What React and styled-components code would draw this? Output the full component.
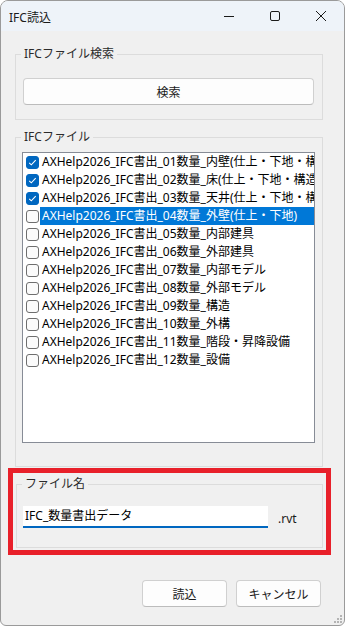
import styled, { createGlobalStyle } from "styled-components"

const Global = createGlobalStyle`
html, body {
margin: 0;
padding: 0;
background: #ffffff;
}
body {
font-family: "Segoe UI", "Noto Sans", "Noto Sans CJK JP", sans-serif;
font-size: 12px;
}
`

const files = [
    { name: "AXHelp2026_IFC書出_01数量_内壁(仕上・下地・構造)", checked: true },
    { name: "AXHelp2026_IFC書出_02数量_床(仕上・下地・構造)", checked: true },
    { name: "AXHelp2026_IFC書出_03数量_天井(仕上・下地・構造)", checked: true },
    { name: "AXHelp2026_IFC書出_04数量_外壁(仕上・下地)", checked: false, selected: true },
    { name: "AXHelp2026_IFC書出_05数量_内部建具", checked: false },
    { name: "AXHelp2026_IFC書出_06数量_外部建具", checked: false },
    { name: "AXHelp2026_IFC書出_07数量_内部モデル", checked: false },
    { name: "AXHelp2026_IFC書出_08数量_外部モデル", checked: false },
    { name: "AXHelp2026_IFC書出_09数量_構造", checked: false },
    { name: "AXHelp2026_IFC書出_10数量_外構", checked: false },
    { name: "AXHelp2026_IFC書出_11数量_階段・昇降設備", checked: false },
    { name: "AXHelp2026_IFC書出_12数量_設備", checked: false },
]

export default function App(){
    return(
        <>
            <Global />
            <Window>
                <TitleBar>
                    <WindowTitle>IFC読込</WindowTitle>
                    <Caption>
                        <CaptionButton>
                            <svg width="12" height="12" viewBox="0 0 12 12">
                                <path d="M1 6.5h10" stroke="#1a1a1a" strokeWidth="1" />
                            </svg>
                        </CaptionButton>
                        <CaptionButton>
                            <svg width="12" height="12" viewBox="0 0 12 12">
                                <rect x="1.5" y="1.5" width="9" height="9" rx="1.5" fill="none" stroke="#1a1a1a" strokeWidth="1" />
                            </svg>
                        </CaptionButton>
                        <CaptionButton>
                            <svg width="12" height="12" viewBox="0 0 12 12">
                                <path d="M1 1l10 10M11 1L1 11" stroke="#1a1a1a" strokeWidth="1" />
                            </svg>
                        </CaptionButton>
                    </Caption>
                </TitleBar>
                <Body>
                    <SearchGroup>
                        <GroupLabel>IFCファイル検索</GroupLabel>
                        <PushButton wide>検索</PushButton>
                    </SearchGroup>
                    <FileGroup>
                        <GroupLabel>IFCファイル</GroupLabel>
                        <ListBox>
                            {files.map((f) => (
                                <Row key={f.name}>
                                    <CheckBox checked={f.checked}>
                                        {f.checked && (
                                            <svg width="9" height="9" viewBox="0 0 9 9">
                                                <path d="M1.2 4.8l2.1 2 4.4-4.6" fill="none" stroke="#ffffff" strokeWidth="1.1" />
                                            </svg>
                                        )}
                                    </CheckBox>
                                    <ItemText selected={f.selected}>{f.name}</ItemText>
                                </Row>
                            ))}
                        </ListBox>
                    </FileGroup>
                    <Highlight>
                        <NameGroup>
                            <GroupLabel>ファイル名</GroupLabel>
                            <NameRow>
                                <TextInput>IFC_数量書出データ</TextInput>
                                <Ext>.rvt</Ext>
                            </NameRow>
                        </NameGroup>
                    </Highlight>
                    <Footer>
                        <PushButton>読込</PushButton>
                        <PushButton>キャンセル</PushButton>
                    </Footer>
                </Body>
                <Grip>
                    <svg width="8" height="8" viewBox="0 0 8 8">
                        <rect x="6" y="0" width="2" height="2" fill="#b4b4b4" />
                        <rect x="3" y="3" width="2" height="2" fill="#b4b4b4" />
                        <rect x="6" y="3" width="2" height="2" fill="#b4b4b4" />
                        <rect x="0" y="6" width="2" height="2" fill="#b4b4b4" />
                        <rect x="3" y="6" width="2" height="2" fill="#b4b4b4" />
                        <rect x="6" y="6" width="2" height="2" fill="#b4b4b4" />
                    </svg>
                </Grip>
            </Window>
        </>
    )
}

const Window = styled.div`
position: relative;
box-sizing: border-box;
width: 345px;
height: 626px;
border: 1px solid #9a9a9a;
border-radius: 8px 8px 6px 6px;
background: #f0f0f0;
overflow: hidden;
display: flex;
flex-direction: column;
`

const TitleBar = styled.div`
height: 30px;
background: #eef3f9;
display: flex;
align-items: center;
justify-content: space-between;
padding-left: 8px;
`

const WindowTitle = styled.div`
font-size: 12px;
color: #1a1a1a;
margin-top: 1px;
`

const Caption = styled.div`
display: flex;
height: 100%;
`

const CaptionButton = styled.div`
width: 46px;
display: flex;
align-items: center;
justify-content: center;
`

const Body = styled.div`
display: flex;
flex-direction: column;
padding: 23px 0 0 14px;
`

const Group = styled.div`
position: relative;
box-sizing: border-box;
width: 308px;
border: 1px solid #dcdcdc;
`

const SearchGroup = styled(Group)`
height: 66px;
padding: 23px 8px 0 7px;
`

const FileGroup = styled(Group)`
margin-top: 17px;
height: 330px;
padding: 14px 0 0 6px;
`

const GroupLabel = styled.div`
position: absolute;
top: -9px;
left: 5px;
padding: 0 3px;
background: #f0f0f0;
color: #2b2b2b;
font-size: 12px;
line-height: 16px;
`

const PushButton = styled.div`
box-sizing: border-box;
width: ${(p) => (p.wide ? "291px" : "85px")};
height: 27px;
background: #fdfdfd;
border: 1px solid #d0d0d0;
border-bottom-color: #bcbcbc;
border-radius: 4px;
display: flex;
align-items: center;
justify-content: center;
color: #1a1a1a;
font-size: 12px;
`

const ListBox = styled.div`
box-sizing: border-box;
width: 293px;
height: 291px;
background: #ffffff;
border: 1px solid #878c96;
overflow: hidden;
`

const Row = styled.div`
height: 18px;
display: flex;
align-items: center;
padding-left: 3px;
white-space: nowrap;
`

const CheckBox = styled.div`
box-sizing: border-box;
flex: none;
width: 13px;
height: 13px;
border-radius: 3px;
border: 1px solid ${(p) => (p.checked ? "#0067c0" : "#6e6e6e")};
background: ${(p) => (p.checked ? "#0067c0" : "#fbfbfb")};
display: flex;
align-items: center;
justify-content: center;
`

const ItemText = styled.div`
flex: 1;
height: 18px;
line-height: 18px;
margin-left: 1px;
padding-left: 2px;
color: ${(p) => (p.selected ? "#ffffff" : "#000000")};
background: ${(p) => (p.selected ? "#0078d7" : "transparent")};
font-size: 12px;
overflow: hidden;
`

const Highlight = styled.div`
box-sizing: border-box;
margin: 1px 0 0 -7px;
width: 323px;
height: 87px;
border: 5px solid #e8202a;
padding: 11px 2px 0 3px;
`

const NameGroup = styled(Group)`
width: 307px;
height: 64px;
padding: 21px 0 0 6px;
`

const NameRow = styled.div`
display: flex;
align-items: flex-end;
`

const TextInput = styled.div`
box-sizing: border-box;
width: 245px;
height: 22px;
background: #ffffff;
border-bottom: 2px solid #0067c0;
padding-left: 2px;
line-height: 20px;
color: #000000;
font-size: 12px;
`

const Ext = styled.div`
margin-left: 10px;
margin-bottom: 1px;
color: #1a1a1a;
font-size: 12px;
`

const Footer = styled.div`
box-sizing: border-box;
display: flex;
justify-content: flex-end;
gap: 9px;
margin-top: 25px;
width: 306px;
`

const Grip = styled.div`
position: absolute;
right: 2px;
bottom: 2px;
line-height: 0;
`
